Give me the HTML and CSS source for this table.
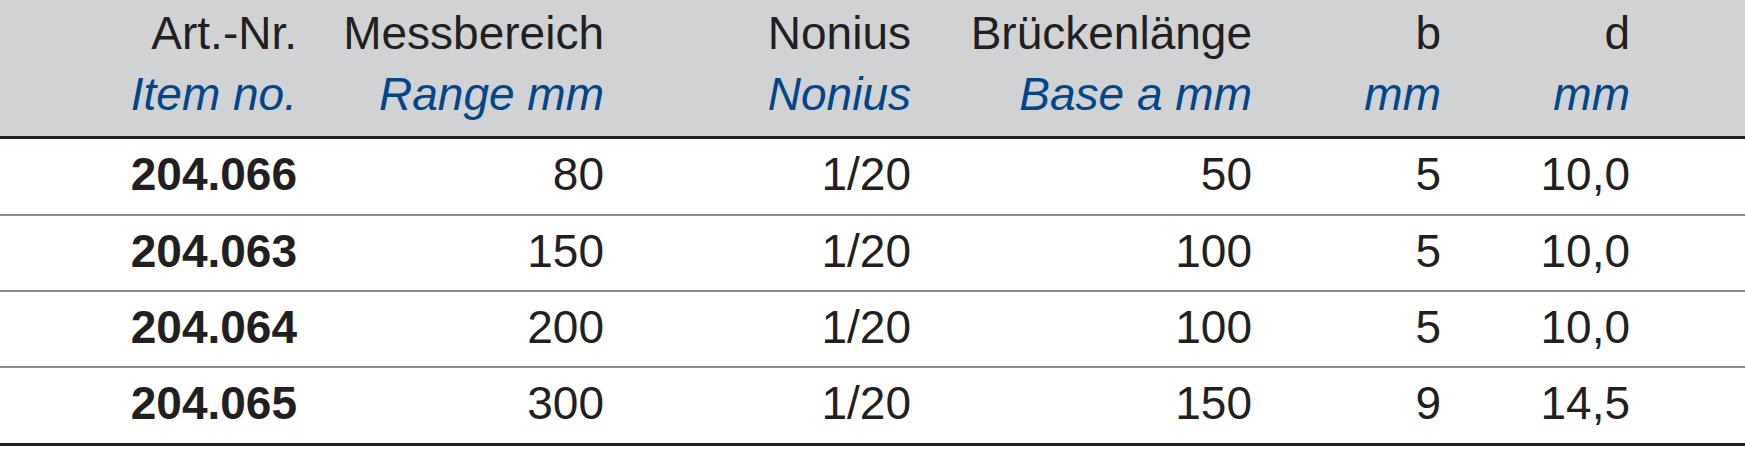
FILE: index.html
```html
<!DOCTYPE html>
<html lang="de">
<head>
<meta charset="utf-8">
<title>Messbereich</title>
<link rel="stylesheet" href="styles.css">
</head>
<body>
<div class="table">
  <div class="row head">
    <div class="cell"><span class="de">Art.-Nr.</span><span class="en">Item no.</span></div>
    <div class="cell"><span class="de">Messbereich</span><span class="en">Range mm</span></div>
    <div class="cell"><span class="de">Nonius</span><span class="en">Nonius</span></div>
    <div class="cell"><span class="de">Brückenlänge</span><span class="en">Base a mm</span></div>
    <div class="cell"><span class="de">b</span><span class="en">mm</span></div>
    <div class="cell"><span class="de">d</span><span class="en">mm</span></div>
    <div class="cell"></div>
  </div>
  <div class="row data first">
    <div class="cell art">204.066</div><div class="cell">80</div><div class="cell">1/20</div><div class="cell">50</div><div class="cell">5</div><div class="cell">10,0</div><div class="cell"></div>
  </div>
  <div class="row data">
    <div class="cell art">204.063</div><div class="cell">150</div><div class="cell">1/20</div><div class="cell">100</div><div class="cell">5</div><div class="cell">10,0</div><div class="cell"></div>
  </div>
  <div class="row data">
    <div class="cell art">204.064</div><div class="cell">200</div><div class="cell">1/20</div><div class="cell">100</div><div class="cell">5</div><div class="cell">10,0</div><div class="cell"></div>
  </div>
  <div class="row data last">
    <div class="cell art">204.065</div><div class="cell">300</div><div class="cell">1/20</div><div class="cell">150</div><div class="cell">9</div><div class="cell">14,5</div><div class="cell"></div>
  </div>
</div>
</body>
</html>
```
FILE: styles.css
```css
html, body {
  margin: 0;
  padding: 0;
  background: #ffffff;
}
body {
  font-family: "Liberation Sans", Arial, sans-serif;
  color: #231f20;
}
.table {
  width: 1745px;
}
.row {
  display: grid;
  grid-template-columns: 297px 307px 307px 341px 189px 189px 1fr;
}
.cell {
  text-align: right;
  white-space: nowrap;
}
.head {
  background: #d1d2d4;
  box-sizing: border-box;
  padding-top: 3px;
  border-bottom: 3px solid #231f20;
  height: 139px;
}
.head .cell {
  display: flex;
  flex-direction: column;
  align-items: flex-end;
  font-size: 46px;
  line-height: 61px;
}
.head .en {
  font-style: italic;
  color: #00468b;
}
.data {
  font-size: 46px;
  line-height: 70px;
  height: 76px;
  box-sizing: border-box;
  padding-bottom: 6px;
  border-bottom: 2px solid #8c8c8c;
}
.data.first {
  height: 77px;
}
.data.last {
  height: 78px;
  border-bottom: 3px solid #231f20;
}
.art {
  font-weight: bold;
}
```
